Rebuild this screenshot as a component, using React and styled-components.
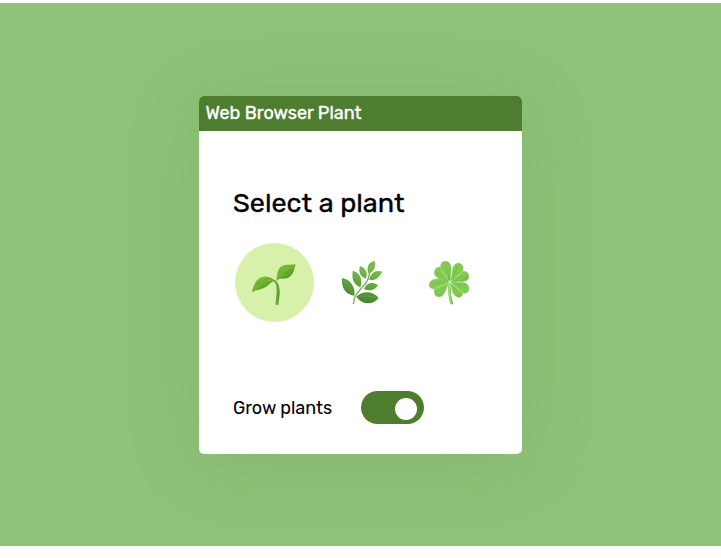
import React, { useState } from "react";
import styled, { createGlobalStyle } from "styled-components";

const GlobalStyle = createGlobalStyle`
  * { box-sizing: border-box; }
  body { margin: 0; background: #fff; font-family: Rubik, Roboto, sans-serif; }
  button { border: 0; padding: 0; background: none; font: inherit; cursor: pointer; }
`;

const Page = styled.main`
  height: 558px;
  padding: 3px 0 12px;
`;

const Backdrop = styled.div`
  height: 543px;
  padding-top: 93px;
  background: #8dc278;
  overflow: hidden;
`;

const Card = styled.section`
  width: 323px;
  height: 357.6px;
  margin-left: 199px;
  border-radius: 5px;
  background: #fff;
  box-shadow: 0 7px 75px rgba(78, 125, 48, 0.15);
`;

const TitleBar = styled.header`
  height: 34.7px;
  padding: 0 6.5px;
  border-radius: 5px 5px 0 0;
  background: #4e7d30;
  color: #fff;
  font-size: 18px;
  font-weight: 400;
  line-height: 35px;
  -webkit-text-stroke: 0.35px currentColor;
`;

const Content = styled.div`
  padding: 54px 34px 0;
`;

const Heading = styled.h1`
  margin: 0;
  height: 36px;
  color: #000;
  font-size: 27px;
  font-weight: 400;
  line-height: 36px;
  -webkit-text-stroke: 0.35px currentColor;
`;

const PlantList = styled.div`
  display: flex;
  gap: 9px;
  margin: 22.6px 0 0 1.5px;
`;

const PlantButton = styled.button`
  display: grid;
  flex: none;
  place-items: center;
  width: 79px;
  height: 79px;
  border-radius: 50%;
  background: ${({ $selected }) => ($selected ? "#d8f1aa" : "transparent")};
`;

const Drawing = styled.svg`
  display: block;
  width: 48px;
  height: 48px;
`;

const GrowRow = styled.div`
  display: flex;
  align-items: center;
  margin-top: 68.6px;
  height: 34px;
`;

const GrowLabel = styled.span`
  width: 128px;
  color: #000;
  font-size: 18px;
  line-height: 24px;
  letter-spacing: -0.04px;
  white-space: nowrap;
`;

const Switch = styled.button`
  display: flex;
  align-items: center;
  justify-content: ${({ $on }) => ($on ? "flex-end" : "flex-start")};
  width: 63px;
  height: 33px;
  padding: 2px 7px 0;
  border-radius: 17px;
  background: ${({ $on }) => ($on ? "#4e7d30" : "#aaa")};
`;

const Knob = styled.span`
  width: 22px;
  height: 22px;
  border-radius: 50%;
  background: #fff;
`;

function Seedling() {
  return (
    <Drawing viewBox="60 63 144 144" fill="none">
      <defs>
        <linearGradient id="seedLeaf" x1="0" y1="0" x2="1" y2="1">
          <stop offset="0" stopColor="#8bc63d" />
          <stop offset="0.5" stopColor="#69ad2c" />
          <stop offset="1" stopColor="#478b21" />
        </linearGradient>
        <linearGradient id="seedStem" x1="0" x2="1">
          <stop offset="0" stopColor="#9bd653" />
          <stop offset="1" stopColor="#4f9429" />
        </linearGradient>
      </defs>
      <path d="M134 126C142 128 149 143 149 162C149 176 146 189 145 200Q140 203 136 199C138 181 142 156 138 142C136 134 130 131 126 129Z" fill="url(#seedStem)" />
      <path d="M66 161C71 139 81 119 99 116C115 113 128 121 139 130C129 127 126 132 118 139C103 153 80 155 66 161Z" fill="url(#seedLeaf)" />
      <path d="M140 129C140 112 142 96 151 87C163 77 184 82 197 79C193 94 189 112 175 119C161 125 148 116 140 129Z" fill="url(#seedLeaf)" />
      <path d="M69 157C84 141 99 129 132 125M141 126C146 111 164 94 193 82" stroke="#8bc64b" strokeWidth="1.8" />
      <path d="M82 145L89 130M91 138L103 148M101 131L113 135M109 127L112 119M154 107L156 94M163 100L176 108M174 93L184 99" stroke="#438c24" strokeWidth="1.4" opacity="0.6" />
      <path d="M66 161C81 154 99 154 113 142M148 119C169 124 183 113 191 96" stroke="#3d8524" strokeWidth="2" opacity="0.55" />
    </Drawing>
  );
}

const HERB_LEAVES = [
  "M36 84C58 88 77 106 73 137C46 134 33 113 36 84Z",
  "M69 62C88 68 100 88 91 112C72 105 63 86 69 62Z",
  "M90 48C106 54 115 68 108 86C91 81 84 65 90 48Z",
  "M134 33C116 36 107 52 116 71C133 64 139 48 134 33Z",
  "M157 65C138 59 123 68 117 90C138 93 149 79 157 65Z",
  "M144 105C127 93 109 99 102 117C117 125 136 121 144 105Z",
  "M146 143C126 122 98 122 79 140C98 166 129 166 146 143Z",
];

function Herb() {
  return (
    <Drawing viewBox="24 27 144 144" fill="none">
      <defs>
        <linearGradient id="herbLeaf" gradientUnits="userSpaceOnUse" x1="120" y1="30" x2="85" y2="160">
          <stop stopColor="#81bf4f" />
          <stop offset="0.55" stopColor="#62a43d" />
          <stop offset="1" stopColor="#437f2c" />
        </linearGradient>
      </defs>
      {HERB_LEAVES.map((d) => (
        <path key={d} d={d} fill="url(#herbLeaf)" />
      ))}
      <path d="M70 162C73 132 88 123 103 105C113 93 118 80 119 67" stroke="#7eb45a" strokeWidth="4.5" />
      <path d="M69 160C72 132 88 119 102 103" stroke="#afd88a" strokeWidth="1.5" />
      <path d="M40 90Q55 106 70 133M72 69L91 107M93 53L107 82M132 37L118 66M153 67L121 86M139 106L107 115M142 143Q112 134 84 141" stroke="#8bc568" strokeWidth="1.4" opacity="0.55" />
    </Drawing>
  );
}

const CLOVER_LEAVES = [
  "M96 98C91 93 77 91 68 87C54 83 47 74 50 63C53 53 61 50 69 53C66 40 74 33 84 34C97 36 101 50 99 63Z",
  "M96 98C98 86 101 76 104 61C104 49 112 39 122 40C134 41 139 53 133 65C145 62 154 70 152 81C150 94 136 96 123 94Z",
  "M97 98C107 96 121 96 135 98C148 99 155 109 152 120C149 129 142 131 134 128C134 138 128 143 119 141C109 139 105 128 101 118Z",
  "M96 98C89 91 72 86 56 87C42 88 33 96 34 106C35 114 42 117 50 116C47 128 50 138 61 140C74 142 80 129 84 118Z",
];

function Clover() {
  return (
    <Drawing viewBox="24 27 144 144" fill="none">
      <defs>
        <radialGradient id="cloverLeaf" cx="0.45" cy="0.4" r="0.65">
          <stop stopColor="#7dcb4b" />
          <stop offset="0.65" stopColor="#84c957" />
          <stop offset="1" stopColor="#6db444" />
        </radialGradient>
      </defs>
      <path d="M94 98C94 123 94 143 101 159" stroke="#65ad36" strokeWidth="8" strokeLinecap="round" />
      <path d="M93 101C93 123 93 143 100 158" stroke="#a2df70" strokeWidth="4" strokeLinecap="round" />
      {CLOVER_LEAVES.map((d) => (
        <path key={d} d={d} fill="url(#cloverLeaf)" stroke="#86cc5a" strokeWidth="2" />
      ))}
      <path d="M96 98L70 59M96 98L132 67M97 98L133 126M96 98L52 115" stroke="#b2e783" strokeWidth="4" opacity="0.65" />
      <path d="M92 87L84 43M104 88L119 49M108 85L144 78M108 99L143 108M103 106L119 132M83 108L65 132M79 97L44 100M80 86L57 69" stroke="#55ae32" strokeWidth="2" opacity="0.4" />
      <path d="M97 96L101 72M85 116L94 101L101 118" stroke="#fff" strokeWidth="2" opacity="0.65" />
      <path d="M92 93L96 97L98 92M96 97L91 101M96 97L102 101" stroke="#e4f8d2" strokeWidth="2.5" />
      <path d="M94 100Q93 121 96 139" stroke="#a2df70" strokeWidth="5" />
    </Drawing>
  );
}

const PLANTS = [
  { name: "Seedling", Icon: Seedling },
  { name: "Herb", Icon: Herb },
  { name: "Clover", Icon: Clover },
];

export default function App() {
  const [selected, setSelected] = useState("Seedling");
  const [growing, setGrowing] = useState(true);

  return (
    <Page>
      <GlobalStyle />
      <Backdrop>
        <Card>
          <TitleBar>Web Browser Plant</TitleBar>
          <Content>
            <Heading>Select a plant</Heading>
            <PlantList>
              {PLANTS.map(({ name, Icon }) => (
                <PlantButton key={name} aria-label={name} $selected={selected === name} onClick={() => setSelected(name)}>
                  <Icon />
                </PlantButton>
              ))}
            </PlantList>
            <GrowRow>
              <GrowLabel>Grow plants</GrowLabel>
              <Switch role="switch" aria-label="Grow plants" aria-checked={growing} $on={growing} onClick={() => setGrowing(!growing)}>
                <Knob />
              </Switch>
            </GrowRow>
          </Content>
        </Card>
      </Backdrop>
    </Page>
  );
}
